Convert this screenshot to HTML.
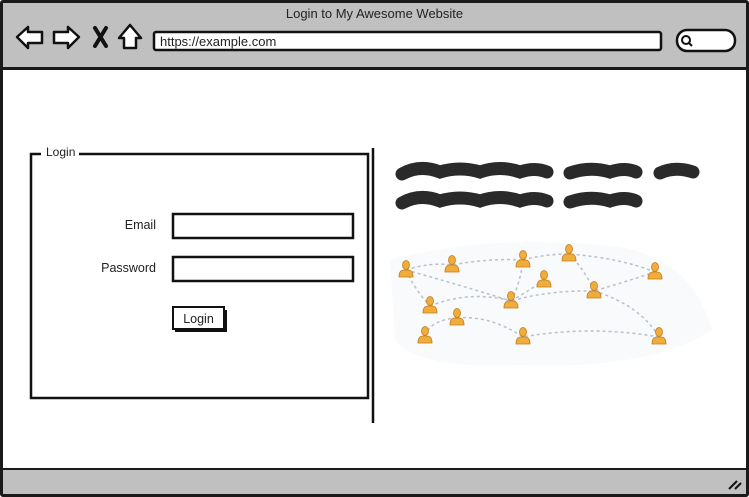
<!DOCTYPE html>
<html><head><meta charset="utf-8"><style>
*{margin:0;padding:0;box-sizing:border-box}
body{width:749px;height:497px;background:#fff;font-family:"Liberation Sans",sans-serif;position:relative;overflow:hidden;color:#222}
.abs{position:absolute}
</style></head><body>
<div class="abs" style="left:0;top:0;width:749px;height:497px;border:3px solid #1a1a1a;border-radius:3px"></div>
<div class="abs" style="left:3px;top:3px;width:743px;height:67px;background:#c0c0c0;border-bottom:3px solid #1a1a1a"></div>
<div class="abs" style="left:3px;top:468px;width:743px;height:26px;background:#c0c0c0;border-top:2px solid #1a1a1a"></div>
<div class="abs" style="left:0;top:6px;width:749px;text-align:center;font-size:13px">Login to My Awesome Website</div>
<svg class="abs" style="left:0;top:0" width="749" height="497">
<defs>
<g id="p"><ellipse cx="0" cy="-7" rx="3.5" ry="4.5"/><path d="M-7 5 Q-7 -2 -2 -2 L2 -2 Q7 -2 7 5 Z"/></g>
</defs>
<g fill="#fff" stroke="#111" stroke-width="2.5" stroke-linejoin="round">
<path d="M17 37 L28 27 L28 32 L42 32 L42 43 L28 43 L28 48 Z"/>
<path d="M79 37 L68 27 L68 32 L54 32 L54 43 L68 43 L68 48 Z"/>
<path d="M130 25 L141 38 L136 38 L136 48 L124 48 L124 38 L119 38 Z"/>
</g>
<path d="M95 28 L106 46 M106 28 L95 46" stroke="#111" stroke-width="4" stroke-linecap="round"/>
<rect x="154" y="32" width="507" height="18" rx="2" fill="#fff" stroke="#111" stroke-width="2.5"/>
<rect x="677" y="30" width="58" height="21" rx="10" fill="#fff" stroke="#111" stroke-width="2.5"/>
<circle cx="686" cy="40" r="4" fill="none" stroke="#111" stroke-width="2"/>
<path d="M689 43 L692 46" stroke="#111" stroke-width="2"/>
<path d="M729 489 L737 481 M735 489 L741 483" stroke="#111" stroke-width="2"/>
<path d="M41 154 L31 154 L31 398 L368 398 L368 154 L79 154" fill="none" stroke="#111" stroke-width="2.5"/>
<path d="M373 148 L373 423" stroke="#111" stroke-width="2.5"/>
<rect x="173" y="214" width="180" height="24" fill="#fff" stroke="#111" stroke-width="2.5"/>
<rect x="173" y="257" width="180" height="24" fill="#fff" stroke="#111" stroke-width="2.5"/>
<rect x="175" y="310" width="52" height="22" fill="#111"/>
<rect x="173" y="307" width="51" height="22" fill="#fff" stroke="#111" stroke-width="2"/>
<path d="M390 260 Q480 235 600 245 Q690 250 712 330 Q650 370 520 365 Q420 370 395 340 Z" fill="#f9fafc"/>
<g stroke="#2a2a2a" stroke-width="13" stroke-linecap="round" fill="none">
<path d="M402 174 Q420 164 440 172 Q460 166 480 172 Q500 165 520 172 Q535 167 547 172"/>
<path d="M570 173 Q590 166 610 172 Q625 167 636 172"/>
<path d="M660 173 Q675 166 693 172"/>
<path d="M402 203 Q420 193 440 201 Q460 195 480 201 Q500 194 520 201 Q535 196 547 201"/>
<path d="M570 202 Q590 195 610 201 Q625 196 636 201"/>
</g>
<g stroke="#b8c0cc" stroke-width="1.5" stroke-dasharray="3,3" fill="none">
<path d="M406 270 Q430 262 452 265 Q490 258 523 260"/>
<path d="M523 260 Q545 254 569 254 Q620 258 655 272"/>
<path d="M406 270 Q460 285 511 301"/>
<path d="M430 306 Q470 290 511 301 Q550 290 594 291 Q625 282 655 272"/>
<path d="M511 301 Q520 285 523 260"/>
<path d="M511 301 Q530 290 544 280"/>
<path d="M457 318 Q490 315 523 337 Q590 325 659 337"/>
<path d="M425 336 Q430 320 457 318"/>
<path d="M594 291 Q640 305 659 337"/>
<path d="M406 270 Q415 290 430 306"/>
<path d="M569 254 Q585 270 594 291"/>
</g>
<g fill="#f0ad3c" stroke="#c57a1c" stroke-width="0.8">
<use href="#p" x="406" y="272"/><use href="#p" x="452" y="267"/><use href="#p" x="523" y="262"/>
<use href="#p" x="569" y="256"/><use href="#p" x="655" y="274"/><use href="#p" x="544" y="282"/>
<use href="#p" x="594" y="293"/><use href="#p" x="511" y="303"/><use href="#p" x="430" y="308"/>
<use href="#p" x="457" y="320"/><use href="#p" x="425" y="338"/><use href="#p" x="523" y="339"/>
<use href="#p" x="659" y="339"/>
</g>
</svg>
<div class="abs" style="left:160px;top:34px;font-size:13px">https://example.com</div>
<div class="abs" style="left:44px;top:145px;font-size:12px;background:#fff;padding:0 2px">Login</div>
<div class="abs" style="left:60px;top:218px;width:96px;text-align:right;font-size:12.5px">Email</div>
<div class="abs" style="left:60px;top:261px;width:96px;text-align:right;font-size:12.5px">Password</div>
<div class="abs" style="left:173px;top:312px;width:51px;text-align:center;font-size:12.5px">Login</div>
</body></html>
